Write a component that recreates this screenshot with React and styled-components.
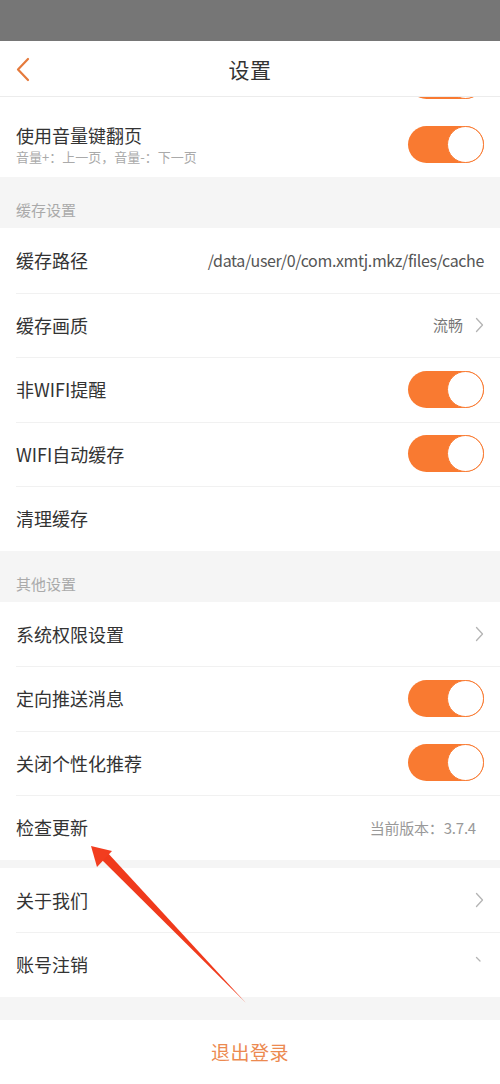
import React from 'react';
import styled, { createGlobalStyle } from 'styled-components';

const GlobalStyle = createGlobalStyle`
  html, body {
    margin: 0;
    padding: 0;
    background: #f5f5f5;
    font-family: "Noto Sans CJK SC", "Noto Sans", sans-serif;
  }
`;

const ORANGE = '#f97a31';

const Page = styled.div`
  position: relative;
  width: 500px;
  height: 1084px;
  overflow: hidden;
  display: flex;
  flex-direction: column;
  background: #f5f5f5;
`;

const StatusBar = styled.div`
  height: 41px;
  background: #767676;
  flex-shrink: 0;
`;

const Header = styled.div`
  position: relative;
  z-index: 2;
  height: 56px;
  background: #fff;
  border-bottom: 1px solid #ececec;
  box-sizing: border-box;
  display: flex;
  align-items: center;
  justify-content: center;
  flex-shrink: 0;
`;

const BackButton = styled.div`
  position: absolute;
  left: 15px;
  top: 16px;
  width: 18px;
  height: 26px;
  display: flex;
`;

const Title = styled.div`
  font-size: 21px;
  color: #333;
  letter-spacing: 0.5px;
`;

const Scroller = styled.div`
  flex: 1;
  overflow: hidden;
`;

const List = styled.div`
  margin-top: -49px;
  display: flex;
  flex-direction: column;
`;

const Group = styled.div`
  background: #fff;
  display: flex;
  flex-direction: column;
`;

const Row = styled.div`
  height: 64.5px;
  box-sizing: border-box;
  padding: 0 16px;
  display: flex;
  align-items: center;
  justify-content: ${p => (p.end ? 'flex-end' : 'space-between')};
  position: relative;

  & + &::before {
    content: '';
    position: absolute;
    top: 0;
    left: 16px;
    right: 0;
    height: 1px;
    background: #f1f1f1;
  }
`;

const Labels = styled.div`
  display: flex;
  flex-direction: column;
`;

const Label = styled.div`
  font-size: 18px;
  color: #333;
  line-height: 24px;
`;

const SubLabel = styled.div`
  font-size: 13px;
  color: #aaa;
  line-height: 18px;
  margin-top: 1px;
`;

const Right = styled.div`
  display: flex;
  align-items: center;
  gap: 12px;
  margin-right: ${p => p.inset || 0}px;
`;

const Value = styled.div`
  font-size: ${p => p.size || 15}px;
  color: ${p => p.color || '#888'};
  white-space: nowrap;
  letter-spacing: ${p => p.spacing || 0}px;
`;

const SectionTitle = styled.div`
  height: 51px;
  box-sizing: border-box;
  padding: 0 16px 8px;
  display: flex;
  align-items: flex-end;
  font-size: 15px;
  color: #aaa;
`;

const Gap = styled.div`
  height: ${p => p.h}px;
`;

const Track = styled.div`
  width: 76px;
  height: 37px;
  border-radius: 19px;
  background: ${ORANGE};
  display: flex;
  justify-content: flex-end;
  align-items: center;
`;

const Knob = styled.div`
  width: 37px;
  height: 37px;
  border-radius: 50%;
  background: #fff;
  border: 1.5px solid ${ORANGE};
  box-sizing: border-box;
`;

const LogoutBar = styled.div`
  height: 64px;
  background: #fff;
  display: flex;
  align-items: center;
  justify-content: center;
  font-size: 19px;
  color: #ec8a50;
  letter-spacing: 0.5px;
`;

const Annotation = styled.svg`
  position: absolute;
  left: 0;
  top: 0;
  pointer-events: none;
  z-index: 5;
`;

const Toggle = () => (
  <Track>
    <Knob />
  </Track>
);

const Chevron = ({ partial }) => (
  <svg width="9" height="16" viewBox="0 0 9 16">
    <path
      d={partial ? 'M1.5 1.5 L5 5' : 'M1.5 1.5 L7.5 8 L1.5 14.5'}
      fill="none"
      stroke="#b4b4b4"
      strokeWidth="1.3"
      strokeLinecap="round"
      strokeLinejoin="round"
    />
  </svg>
);

const App = () => (
  <>
    <GlobalStyle />
    <Page>
      <StatusBar />
      <Header>
        <BackButton>
          <svg width="18" height="26" viewBox="0 0 18 26">
            <path d="M13 2 L3 12.5 L13 23" fill="none" stroke="#e57a3c" strokeWidth="2.2" strokeLinecap="round" strokeLinejoin="round" />
          </svg>
        </BackButton>
        <Title>设置</Title>
      </Header>
      <Scroller>
        <List>
          <Group>
            {/* row scrolled mostly under the header */}
            <Row end>
              <Toggle />
            </Row>
            <Row>
              <Labels>
                <Label>使用音量键翻页</Label>
                <SubLabel>音量+：上一页，音量-：下一页</SubLabel>
              </Labels>
              <Toggle />
            </Row>
          </Group>
          <SectionTitle>缓存设置</SectionTitle>
          <Group>
            <Row>
              <Label>缓存路径</Label>
              <Value size={16} color="#555" spacing={-0.35}>/data/user/0/com.xmtj.mkz/files/cache</Value>
            </Row>
            <Row>
              <Label>缓存画质</Label>
              <Right>
                <Value color="#777">流畅</Value>
                <Chevron />
              </Right>
            </Row>
            <Row>
              <Label>非WIFI提醒</Label>
              <Toggle />
            </Row>
            <Row>
              <Label>WIFI自动缓存</Label>
              <Toggle />
            </Row>
            <Row>
              <Label>清理缓存</Label>
            </Row>
          </Group>
          <SectionTitle>其他设置</SectionTitle>
          <Group>
            <Row>
              <Label>系统权限设置</Label>
              <Chevron />
            </Row>
            <Row>
              <Label>定向推送消息</Label>
              <Toggle />
            </Row>
            <Row>
              <Label>关闭个性化推荐</Label>
              <Toggle />
            </Row>
            <Row>
              <Label>检查更新</Label>
              <Right inset={8}>
                <Value color="#999" spacing={-0.2}>当前版本：3.7.4</Value>
              </Right>
            </Row>
          </Group>
          <Gap h={8} />
          <Group>
            <Row>
              <Label>关于我们</Label>
              <Chevron />
            </Row>
            <Row>
              <Label>账号注销</Label>
              <Chevron partial />
            </Row>
          </Group>
          <Gap h={23} />
          <LogoutBar>退出登录</LogoutBar>
        </List>
      </Scroller>
      <Annotation width="500" height="1084" viewBox="0 0 500 1084">
        <polygon points="99,857 106,851 246,1003" fill="#f03a1c" />
        <polygon points="91,846 112,851 97,867" fill="#f23d1f" />
      </Annotation>
    </Page>
  </>
);

export default App;
